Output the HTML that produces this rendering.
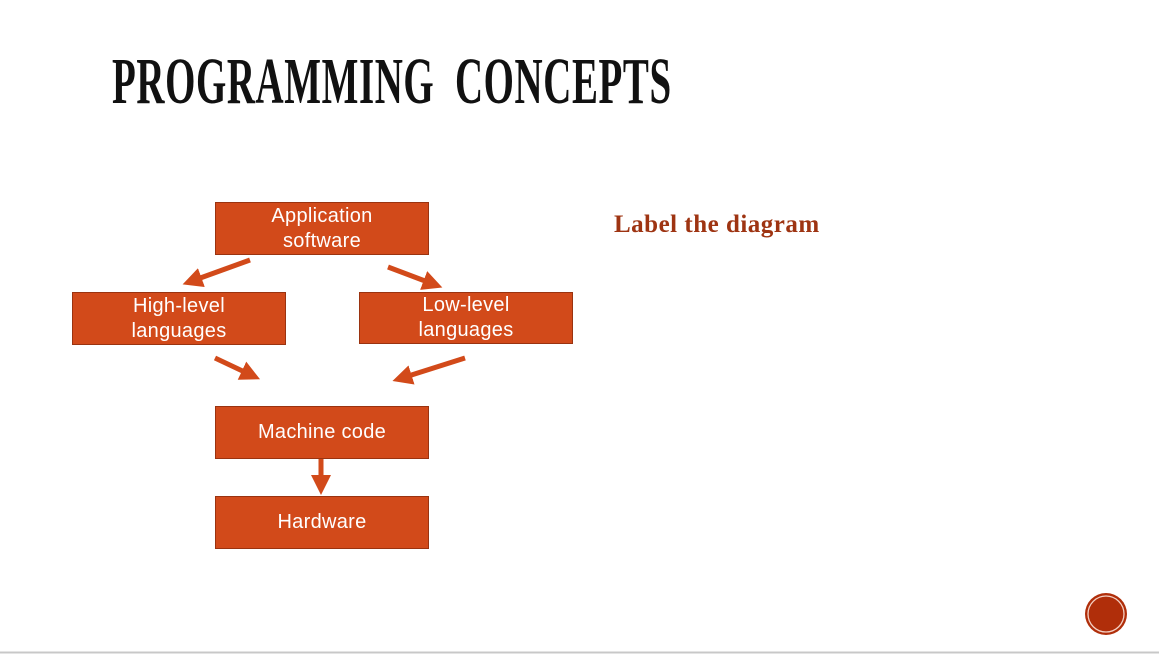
<!DOCTYPE html>
<html><head><style>
body{margin:0;width:1159px;height:654px;background:#fff;position:relative;overflow:hidden;font-family:"Liberation Sans",sans-serif}
.t{position:absolute;left:112px;top:45px;font-family:"Liberation Serif",serif;font-weight:bold;font-size:66px;color:#111;letter-spacing:1px;transform:scaleX(0.59);transform-origin:left top;white-space:nowrap;line-height:74px}
.b{position:absolute;width:214px;height:51px;background:#D24A1A;border:1px solid #9a3310;color:#fff;font-size:20px;letter-spacing:0.3px;line-height:25px;display:flex;align-items:center;justify-content:center;text-align:center;box-sizing:border-box}
.l{position:absolute;left:614px;top:211px;font-family:"Liberation Serif",serif;font-weight:bold;font-size:25px;letter-spacing:0.5px;color:#9E3412}
</style></head><body>
<div class="t">PROGRAMMING&nbsp; CONCEPTS</div>
<div class="b" style="left:215px;top:202px;height:53px">Application<br>software</div>
<div class="b" style="left:72px;top:292px;height:53px">High-level<br>languages</div>
<div class="b" style="left:359px;top:292px;height:52px">Low-level<br>languages</div>
<div class="b" style="left:215px;top:406px;height:53px">Machine code</div>
<div class="b" style="left:215px;top:496px;height:53px">Hardware</div>
<div class="l">Label the diagram</div>
<svg width="1159" height="654" style="position:absolute;left:0;top:0">
<defs><marker id="a" markerWidth="4" markerHeight="4" refX="2" refY="2" orient="auto"><path d="M0,0 L4,2 L0,4z" fill="#D24A1A"/></marker></defs>
<g stroke="#D24A1A" stroke-width="5" marker-end="url(#a)">
<line x1="250" y1="260" x2="192" y2="281"/>
<line x1="388" y1="267" x2="433" y2="284"/>
<line x1="215" y1="358" x2="251" y2="375"/>
<line x1="465" y1="358" x2="402" y2="378"/>
<line x1="321" y1="459" x2="321" y2="485"/>
</g>
<circle cx="1106" cy="614" r="21" fill="#B02E0A"/>
<circle cx="1106" cy="614" r="18" fill="none" stroke="#f4d0c4" stroke-width="1.3"/>
<line x1="0" y1="652.5" x2="1159" y2="652.5" stroke="#c8c8c8" stroke-width="2"/>
</svg>
</body></html>
